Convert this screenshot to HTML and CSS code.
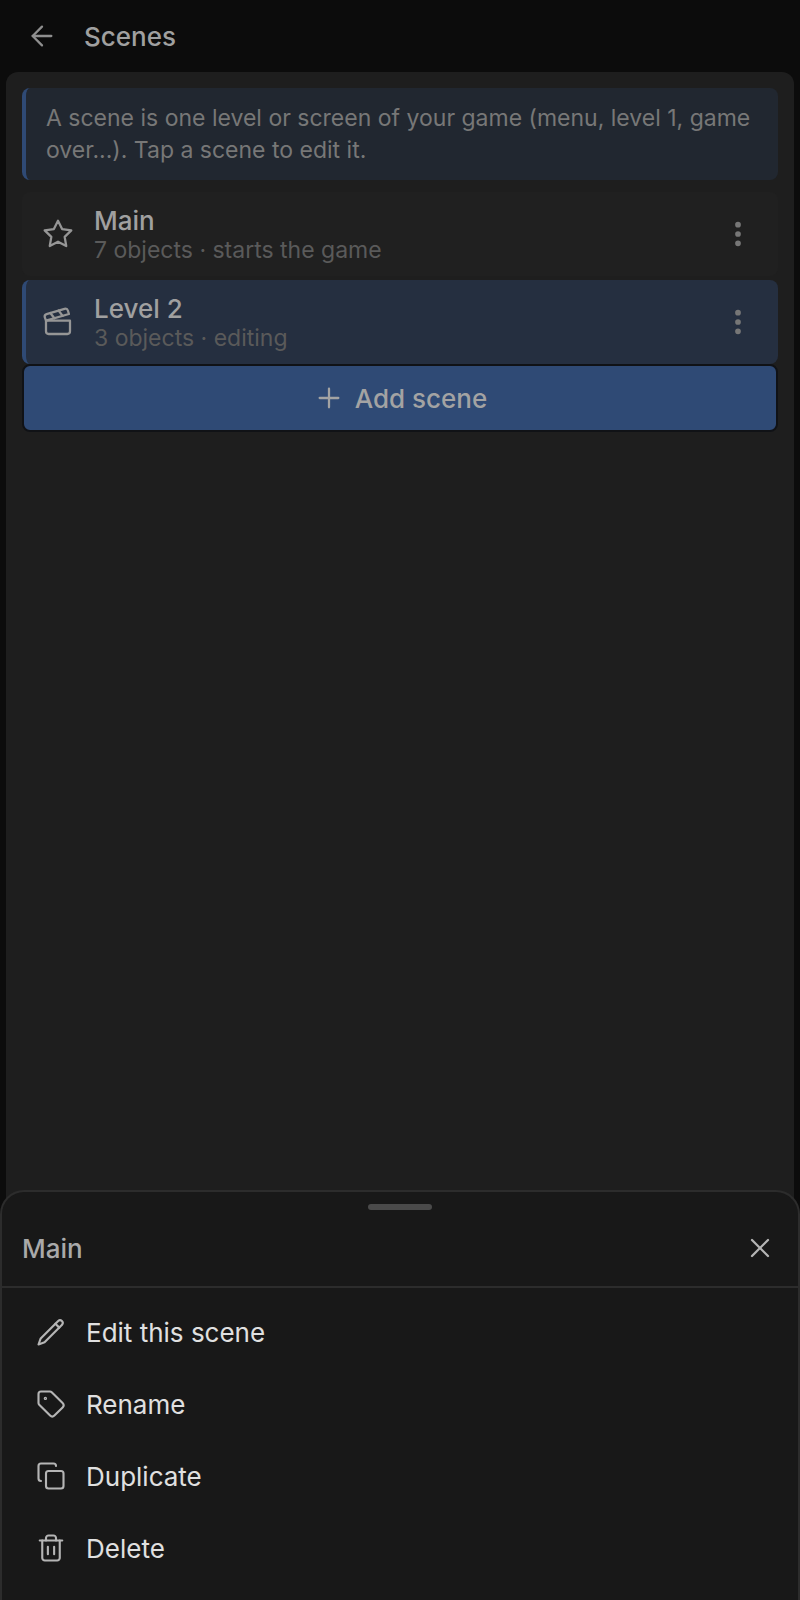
FILE: index.html
```html
<!DOCTYPE html>
<html lang="en">
<head>
<meta charset="utf-8">
<title>Scenes</title>
<link rel="stylesheet" href="styles.css">
</head>
<body>
<div class="app">
  <header class="topbar">
    <svg class="icon back" viewBox="0 0 24 24"><path d="m12 19-7-7 7-7"/><path d="M19 12H5"/></svg>
    <h1 class="title">Scenes</h1>
  </header>
  <main class="panel">
    <p class="callout">A scene is one level or screen of your game (menu, level 1, game over...). Tap a scene to edit it.</p>
    <div class="scene">
      <svg class="icon" viewBox="0 0 24 24"><polygon points="12 2 15.09 8.26 22 9.27 17 14.14 18.18 21.02 12 17.77 5.82 21.02 7 14.14 2 9.27 8.91 8.26 12 2"/></svg>
      <div class="scene-text"><div class="scene-name">Main</div><div class="scene-sub">7 objects · starts the game</div></div>
      <svg class="icon more" viewBox="0 0 24 24"><circle cx="12" cy="5" r="1.3"/><circle cx="12" cy="12" r="1.3"/><circle cx="12" cy="19" r="1.3"/></svg>
    </div>
    <div class="scene active">
      <svg class="icon" viewBox="0 0 24 24"><path d="M20.2 6 3 11l-.9-2.4c-.3-1.1.3-2.2 1.3-2.5l13.5-4c1.1-.3 2.2.3 2.5 1.3Z"/><path d="m6.2 5.3 3.1 3.9"/><path d="m12.4 3.4 3.1 4"/><path d="M3 11h18v8a2 2 0 0 1-2 2H5a2 2 0 0 1-2-2Z"/></svg>
      <div class="scene-text"><div class="scene-name">Level 2</div><div class="scene-sub">3 objects · editing</div></div>
      <svg class="icon more" viewBox="0 0 24 24"><circle cx="12" cy="5" r="1.3"/><circle cx="12" cy="12" r="1.3"/><circle cx="12" cy="19" r="1.3"/></svg>
    </div>
    <div class="add">
      <svg class="icon" viewBox="0 0 24 24"><path d="M5 12h14"/><path d="M12 5v14"/></svg>
      <span>Add scene</span>
    </div>
  </main>
  <section class="sheet">
    <div class="handle"></div>
    <div class="sheet-head">
      <span class="sheet-title">Main</span>
      <svg class="icon close" viewBox="0 0 24 24"><path d="M18 6 6 18"/><path d="m6 6 12 12"/></svg>
    </div>
    <div class="actions">
      <div class="action">
        <svg class="icon" viewBox="0 0 24 24"><path d="M17.75 3.15a2.2 2.2 0 0 1 3.1 3.1L6.85 20.25 2 22l1.75-4.85Z"/><path d="m15.5 5.4 3.1 3.1"/></svg>
        <span>Edit this scene</span>
      </div>
      <div class="action">
        <svg class="icon" viewBox="0 0 24 24"><path d="M12.586 2.586A2 2 0 0 0 11.172 2H4a2 2 0 0 0-2 2v7.172a2 2 0 0 0 .586 1.414l8.704 8.704a2.426 2.426 0 0 0 3.42 0l6.58-6.58a2.426 2.426 0 0 0 0-3.42z"/><circle cx="7.5" cy="7.5" r=".5"/></svg>
        <span>Rename</span>
      </div>
      <div class="action">
        <svg class="icon" viewBox="0 0 24 24"><rect x="8" y="8" width="14" height="14" rx="2"/><path d="M4 16c-1.1 0-2-.9-2-2V4c0-1.1.9-2 2-2h10c1.1 0 2 .9 2 2"/></svg>
        <span>Duplicate</span>
      </div>
      <div class="action">
        <svg class="icon" viewBox="0 0 24 24"><path d="M3 6h18"/><path d="M19 6v14c0 1-1 2-2 2H7c-1 0-2-1-2-2V6"/><path d="M8 6V4c0-1 1-2 2-2h4c1 0 2 1 2 2v2"/><path d="M9.5 11v6"/><path d="M14.5 11v6"/></svg>
        <span>Delete</span>
      </div>
    </div>
  </section>
</div>
</body>
</html>
```
FILE: styles.css
```css
* { box-sizing: border-box; }
html, body { margin: 0; padding: 0; }
body {
  background: #0c0c0c;
  font-family: Inter, "Liberation Sans", sans-serif;
  color: #a8a8a8;
}
.app {
  position: relative;
  width: 800px;
  height: 1600px;
  overflow: hidden;
  display: flex;
  flex-direction: column;
}
.icon {
  width: 32px;
  height: 32px;
  flex: none;
  fill: none;
  stroke: currentColor;
  stroke-width: 1.7;
  stroke-linecap: round;
  stroke-linejoin: round;
}
.topbar {
  height: 72px;
  flex: none;
  display: flex;
  align-items: center;
  padding-left: 26px;
  gap: 26px;
  color: #8f8f8f;
}
.title {
  margin: 0;
  padding-top: 2px;
  font-size: 26px;
  line-height: 32px;
  font-weight: 500;
  color: #a0a0a0;
}
.panel {
  flex: 1;
  margin: 0 6px;
  padding: 16px;
  background: #1e1e1e;
  border-radius: 12px 12px 0 0;
  display: flex;
  flex-direction: column;
}
.callout {
  margin: 0 0 12px;
  height: 92px;
  padding: 14px 16px 0 20px;
  background: #212730;
  border-left: 4px solid #2f4a75;
  border-radius: 8px;
  font-size: 23px;
  line-height: 32px;
  color: #777777;
}
.scene {
  height: 84px;
  flex: none;
  display: flex;
  align-items: center;
  gap: 20px;
  padding: 0 20px;
  margin-bottom: 4px;
  background: #202020;
  border-radius: 8px;
  color: #969696;
}
.scene.active {
  margin-bottom: 0;
  background: #252f40;
  border-left: 4px solid #2f4a75;
  padding-left: 16px;
}
.scene-text { flex: 1; min-width: 0; padding-top: 2px; }
.scene-name {
  font-size: 26px;
  line-height: 28px;
  font-weight: 500;
  color: #a0a0a0;
}
.scene-sub {
  margin-top: 1px;
  font-size: 23px;
  line-height: 28px;
  color: #5a5a5a;
}
.more { fill: #777777; stroke: #777777; margin-right: 4px; }
.add {
  height: 68px;
  flex: none;
  display: flex;
  align-items: center;
  justify-content: center;
  gap: 10px;
  background: #2f4a75;
  border: 2px solid #101216;
  border-radius: 8px;
  font-size: 26px;
  font-weight: 500;
  color: #a3a3a3;
}
.sheet {
  position: absolute;
  left: 0;
  right: 0;
  bottom: 0;
  height: 410px;
  background: #181818;
  border: 2px solid #2c2c2c;
  border-bottom: 0;
  border-radius: 24px 24px 0 0;
}
.handle {
  width: 64px;
  height: 6px;
  margin: 12px auto 0;
  background: #4a4a4a;
  border-radius: 3px;
}
.sheet-head {
  height: 78px;
  display: flex;
  align-items: center;
  justify-content: space-between;
  padding: 0 22px 0 20px;
  border-bottom: 2px solid #2c2c2c;
  color: #b5b5b5;
}
.sheet-title {
  font-size: 26px;
  font-weight: 500;
  color: #a9a9a9;
}
.actions {
  display: flex;
  flex-direction: column;
  padding-top: 8px;
}
.action {
  height: 72px;
  display: flex;
  align-items: center;
  gap: 20px;
  padding-left: 34px;
  font-size: 26px;
  font-weight: 400;
  color: #e0e0e0;
}
.action .icon { width: 30px; height: 30px; color: #b5b5b5; }
```
